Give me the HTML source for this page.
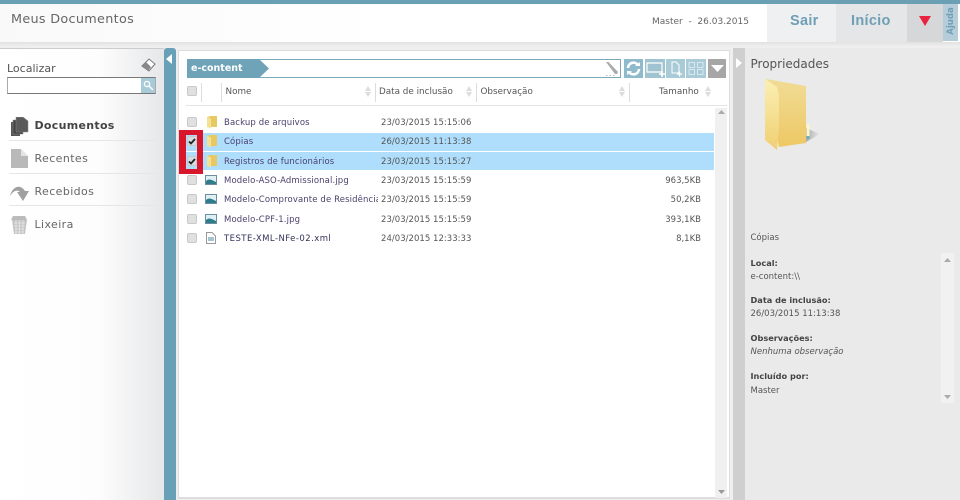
<!DOCTYPE html>
<html><head><meta charset="utf-8">
<style>
html,body{margin:0;padding:0;width:960px;height:500px;overflow:hidden;background:#efefef}
body{font-family:"DejaVu Sans","Liberation Sans",sans-serif;color:#555;position:relative}
div,span,svg{position:absolute;box-sizing:border-box}
.t{white-space:nowrap;line-height:12px}
.r{font-size:8.5px;color:#4a3f6b;left:224px;letter-spacing:.12px}
.d{font-size:8.5px;color:#555;left:381px;letter-spacing:.03px}
.s{font-size:8.5px;color:#555;right:259px;text-align:right}
.cb{left:187px;width:10px;height:10px;background:#e0e0e0;border:1px solid #c8c8c8;border-radius:2px}
.sep{width:1px;top:83px;height:19px;background:#ddd}
.h{font-size:8.8px;color:#555;top:86px}
.sort{width:6px;height:11px;top:86px}
.btn{top:59px;height:19px;background:#9fc3d1}
.nav{font-size:11px;left:34.5px;color:#666;letter-spacing:.4px}
.line{left:9px;width:147px;height:1px;background:#e6e6e6}
.pb{font-size:8.2px;font-weight:bold;color:#444;left:750.5px}
.pv{font-size:8.5px;color:#555;left:750.5px}
</style></head>
<body>
<!-- header -->
<div style="left:0;top:0;width:960px;height:4px;background:#6b9fb4"></div>
<div style="left:0;top:4px;width:960px;height:38px;background:linear-gradient(90deg,#f9f9f9,#fff 40%,#fff)"></div>
<div style="left:0;top:42px;width:960px;height:5px;background:linear-gradient(#e2e2e2,#f0f0f0)"></div>
<div class="t" style="left:11px;top:14px;font-size:12.8px;color:#666;letter-spacing:.3px">Meus Documentos</div>
<div class="t" style="left:652px;top:16px;font-size:9px;color:#666;white-space:pre">Master  -  26.03.2015</div>
<div style="left:767px;top:4px;width:69px;height:38px;background:#eef0f1"></div>
<div style="left:836px;top:4px;width:71px;height:38px;background:#e4e6e8"></div>
<div style="left:907px;top:4px;width:36px;height:38px;background:#d6d7d9"></div>
<div style="left:943px;top:4px;width:15px;height:37px;background:#b4cdd8"></div>
<div class="t" style="left:790px;top:15px;font-weight:bold;color:#6f9fb5;font-family:'Liberation Sans',sans-serif;letter-spacing:.3px;font-size:14.5px">Sair</div>
<div class="t" style="left:851px;top:15px;font-size:14.5px;font-weight:bold;color:#6f9fb5;font-family:'Liberation Sans',sans-serif;letter-spacing:.3px">Início</div>
<svg style="left:918px;top:16px" width="14" height="11"><path d="M1 0H13L7 10Z" fill="#e8223f"/></svg>
<div class="t" style="transform:rotate(-90deg);transform-origin:50% 50%;left:935px;top:15px;width:32px;text-align:center;font-size:8.5px;font-weight:bold;color:#6f9fb5">Ajuda</div>

<!-- left panel -->
<div style="left:0;top:48px;width:164px;height:452px;background:linear-gradient(90deg,#fff 0,#fdfdfd 60%,#e6e7e9 100%);border-top:1px solid #ccc"></div>
<div class="t" style="left:7px;top:63px;font-size:11px;color:#555">Localizar</div>
<svg style="left:141px;top:58px" width="15" height="15"><path d="M1 8L8 1L14 6L8 13Z" fill="#fff" stroke="#777"/><path d="M1 8L5 4L10 9L7 13Z" fill="#888"/></svg>
<div style="left:7px;top:77px;width:149px;height:17px;background:#fff;border:1px solid #aaa;border-top-color:#777;border-bottom-color:#777"></div>
<div style="left:141px;top:78px;width:14px;height:15px;background:#a7cbd8"></div>
<svg style="left:142px;top:79px" width="13" height="13"><circle cx="5" cy="5" r="2.6" fill="none" stroke="#fff" stroke-width="1.3"/><path d="M7 7L11 11" stroke="#fff" stroke-width="1.5"/></svg>

<svg style="left:11px;top:117px" width="18" height="19"><path d="M0 5H9V19H0Z" fill="#555"/><path d="M2 3H12V17H2Z" fill="#444" stroke="#888" stroke-width=".5"/><path d="M5 0H12L17 4V15H5Z" fill="#5a5a5a" stroke="#888" stroke-width=".5"/></svg>
<div class="t" style="left:34.5px;top:120px;font-size:11px;font-weight:bold;color:#444;letter-spacing:.3px">Documentos</div>
<div class="line" style="top:140px"></div>
<svg style="left:11px;top:149px" width="17" height="19"><path d="M0 0H10L17 7V19H0Z" fill="#b9b9b9"/><path d="M10 0L17 7H10Z" fill="#e4e4e4"/></svg>
<div class="t nav" style="top:153px">Recentes</div>
<div class="line" style="top:173px"></div>
<svg style="left:10px;top:183px" width="19" height="19"><path d="M0 13C2 4 10 0 15 8L19 8L13 18L7 9L10 9C7 6 3 8 0 13Z" fill="#a0a0a0"/></svg>
<div class="t nav" style="top:186px">Recebidos</div>
<div class="line" style="top:205px"></div>
<svg style="left:11px;top:215px" width="17" height="19"><path d="M2 1H14L16 5H0Z" fill="#bbb"/><path d="M1 5H16L14 19H3Z" fill="#c4c4c4"/><path d="M3 8H14M3 11H14M4 14H13M4 17H13M5 5V19M8.5 5V19M12 5V19" stroke="#e8e8e8" stroke-width=".8"/></svg>
<div class="t nav" style="top:219px">Lixeira</div>

<!-- teal bar -->
<div style="left:164px;top:48px;width:12px;height:452px;background:#68a0b8;border-radius:3px 3px 0 0"></div>
<svg style="left:166px;top:54px" width="7" height="10"><path d="M6 0V10L0 5Z" fill="#fff"/></svg>

<!-- main panel -->
<div style="left:178px;top:50px;width:552px;height:449px;background:#fff;border:1px solid #ddd;border-bottom:2px solid #ddd"></div>
<div style="left:715px;top:108px;width:12px;height:390px;background:#f0f0f0"></div>
<svg style="left:718px;top:110px" width="7" height="4"><path d="M0 4H7L3.5 0Z" fill="#aaa"/></svg>
<svg style="left:718px;top:490px" width="7" height="4"><path d="M0 0H7L3.5 4Z" fill="#999"/></svg>

<!-- toolbar -->
<div style="left:187px;top:59px;width:434px;height:19px;background:#fff;border:1px solid #7ba9bc"></div>
<svg style="left:187px;top:59px" width="83" height="19"><path d="M0 0H72L82 9.5L72 19H0Z" fill="#6fa3b8"/></svg>
<div class="t" style="left:191px;top:63px;font-size:9.5px;font-weight:bold;color:#fff">e-content</div>
<svg style="left:604px;top:62px" width="15" height="15"><path d="M2 0H4.500L14 10L13 12H11Z" fill="#aaa"/><path d="M2 13.500H3.500M5.500 13.500H7M9 13.500H10.500" stroke="#bbb"/></svg>
<div class="btn" style="left:624px;width:19px;background:#8fbacb"></div>
<svg style="left:626px;top:61px" width="15" height="15"><path d="M2 7A5.500 5.500 0 0 1 12 4M13 8A5.500 5.500 0 0 1 3 11" fill="none" stroke="#fff" stroke-width="2.600"/><path d="M9 5H14V1ZM6 10H1V14Z" fill="#fff"/></svg>
<div class="btn" style="left:645px;width:20px"></div>
<svg style="left:645px;top:59px" width="21" height="19"><path d="M2 4H17V13H2Z" fill="none" stroke="#fff" stroke-width="1.200"/><path d="M14 15H20M17 12V18" stroke="#fff" stroke-width="1.600"/></svg>
<div class="btn" style="left:666px;width:19px;background:#a9cad7"></div>
<svg style="left:666px;top:59px" width="19" height="19"><path d="M6 3H10L13 6V14H6Z" fill="none" stroke="#fff"/><path d="M11 15H16M13.500 12.500V17.500" stroke="#fff" stroke-width="1.300"/></svg>
<div class="btn" style="left:686px;width:20px;background:#a9cad7"></div>
<svg style="left:686px;top:59px" width="20" height="19"><path d="M3 3.500H8.500V8.500H3ZM11.500 3.500H17V8.500H11.500ZM3 10.500H8.500V15.500H3ZM11.500 10.500H17V15.500H11.500Z" fill="none" stroke="#d8e8ee"/></svg>
<div class="btn" style="left:708px;width:18px;background:#a6a6a6"></div>
<svg style="left:711px;top:65px" width="13" height="8"><path d="M0 0H13L6.500 7Z" fill="#fff"/></svg>

<!-- table head -->
<div class="cb" style="top:86px"></div>
<div class="sep" style="left:201px"></div>
<div class="sep" style="left:221px"></div>
<div class="sep" style="left:375px"></div>
<div class="sep" style="left:476px"></div>
<div class="sep" style="left:629px"></div>
<div class="t h" style="left:225.500px">Nome</div>
<div class="t h" style="left:379px">Data de inclusão</div>
<div class="t h" style="left:480.500px">Observação</div>
<div class="t h" style="left:659px">Tamanho</div>
<svg class="sort" style="left:365px"><path d="M0 5L3 0L6 5ZM0 6L3 11L6 6Z" fill="#ddd"/></svg>
<svg class="sort" style="left:466px"><path d="M0 5L3 0L6 5ZM0 6L3 11L6 6Z" fill="#ddd"/></svg>
<svg class="sort" style="left:619px"><path d="M0 5L3 0L6 5ZM0 6L3 11L6 6Z" fill="#ddd"/></svg>
<svg class="sort" style="left:705px"><path d="M0 5L3 0L6 5ZM0 6L3 11L6 6Z" fill="#ddd"/></svg>
<div style="left:186px;top:105px;width:541px;height:1px;background:#e4e4e4"></div>

<!-- highlight -->
<div style="left:186px;top:133px;width:528px;height:18px;background:#aedefc"></div>
<div style="left:186px;top:152px;width:528px;height:18px;background:#aedefc"></div>
<div style="left:179px;top:130px;width:24px;height:44px;border:solid #d8162c;border-width:5px 6px 5px 7px"></div>

<!-- checkboxes -->
<div class="cb" style="top:117px"></div>
<div class="cb" style="top:136px;background:#d4dde2"></div>
<div class="cb" style="top:156px;background:#d4dde2"></div>
<div class="cb" style="top:175px"></div>
<div class="cb" style="top:194px"></div>
<div class="cb" style="top:214px"></div>
<div class="cb" style="top:233px"></div>
<svg style="left:187px;top:137px" width="10" height="9"><path d="M2 4.500L4 6.500L8 2" fill="none" stroke="#222" stroke-width="1.800"/></svg>
<svg style="left:187px;top:157px" width="10" height="9"><path d="M2 4.500L4 6.500L8 2" fill="none" stroke="#222" stroke-width="1.800"/></svg>

<!-- folder icons -->
<svg style="left:207px;top:116px" width="11" height="13"><path d="M0 1L4 0H10V11H3Z" fill="#e8c860"/><path d="M0 1L4 2.500V12.500L0 11Z" fill="#f5e196"/></svg>
<svg style="left:207px;top:135px" width="11" height="13"><path d="M0 1L4 0H10V11H3Z" fill="#e8c860"/><path d="M0 1L4 2.500V12.500L0 11Z" fill="#f5e196"/></svg>
<svg style="left:207px;top:155px" width="11" height="13"><path d="M0 1L4 0H10V11H3Z" fill="#e8c860"/><path d="M0 1L4 2.500V12.500L0 11Z" fill="#f5e196"/></svg>
<!-- image icons -->
<svg style="left:205px;top:175px" width="12" height="10"><rect x=".5" y=".5" width="11" height="9" fill="#dff0f5" stroke="#6d8ea0"/><path d="M1 8V6C4 3 7 5 11 7V9H1Z" fill="#2f7d8c"/></svg>
<svg style="left:205px;top:194px" width="12" height="10"><rect x=".5" y=".5" width="11" height="9" fill="#dff0f5" stroke="#6d8ea0"/><path d="M1 8V6C4 3 7 5 11 7V9H1Z" fill="#2f7d8c"/></svg>
<svg style="left:205px;top:214px" width="12" height="10"><rect x=".5" y=".5" width="11" height="9" fill="#dff0f5" stroke="#6d8ea0"/><path d="M1 8V6C4 3 7 5 11 7V9H1Z" fill="#2f7d8c"/></svg>
<svg style="left:206px;top:232px" width="10" height="12"><path d="M.5 .5H6L9.500 4V11.500H.5Z" fill="#fff" stroke="#999"/><path d="M2 6H8M2 8H8" stroke="#4a8a99"/></svg>

<!-- rows -->
<div class="t r" style="top:117px">Backup de arquivos</div>
<div class="t r" style="top:136px">Cópias</div>
<div class="t r" style="top:156px">Registros de funcionários</div>
<div class="t r" style="top:175px">Modelo-ASO-Admissional.jpg</div>
<div class="t r" style="top:194px;width:154px;overflow:hidden">Modelo-Comprovante de Residência.jpg</div>
<div class="t r" style="top:214px">Modelo-CPF-1.jpg</div>
<div class="t r" style="top:233px;color:#333358;letter-spacing:.45px">TESTE-XML-NFe-02.xml</div>

<div class="t d" style="top:117px">23/03/2015 15:15:06</div>
<div class="t d" style="top:136px">26/03/2015 11:13:38</div>
<div class="t d" style="top:156px">23/03/2015 15:15:27</div>
<div class="t d" style="top:175px">23/03/2015 15:15:59</div>
<div class="t d" style="top:194px">23/03/2015 15:15:59</div>
<div class="t d" style="top:214px">23/03/2015 15:15:59</div>
<div class="t d" style="top:233px">24/03/2015 12:33:33</div>

<div class="t s" style="top:175px">963,5KB</div>
<div class="t s" style="top:194px">50,2KB</div>
<div class="t s" style="top:214px">393,1KB</div>
<div class="t s" style="top:233px">8,1KB</div>

<!-- properties -->
<div style="left:733px;top:48px;width:12px;height:452px;background:#cfcfcf"></div>
<div style="left:745px;top:48px;width:215px;height:452px;background:#eaeaea"></div>
<svg style="left:736px;top:58px" width="7" height="10"><path d="M0 0V10L6 5Z" fill="#fff"/></svg>
<div class="t" style="left:750.500px;top:58px;font-size:12px;color:#555">Propriedades</div>
<svg style="left:762px;top:78px" width="60" height="75">
<defs>
<linearGradient id="a" x1="0" y1="0" x2="0" y2="1"><stop offset="0" stop-color="#f0dc96"/><stop offset="1" stop-color="#eec864"/></linearGradient>
<linearGradient id="b" x1="0" y1="0" x2="0" y2="1"><stop offset="0" stop-color="#fbf0b4"/><stop offset="1" stop-color="#f0cf72"/></linearGradient>
<linearGradient id="c" x1="0" y1="0" x2="1" y2="0"><stop offset="0" stop-color="#aaa"/><stop offset="1" stop-color="#eaeaea"/></linearGradient>
</defs>
<path d="M44 64L58 56L44 50Z" fill="url(#c)"/>
<path d="M4 1L44 8V65L17 69Z" fill="url(#a)"/>
<path d="M3 1L15 9L17 17V50L15 72L3 62Z" fill="url(#b)"/>
<rect x="44.500" y="46" width="3" height="15" fill="#fdf6c8"/>
<rect x="44.500" y="58" width="3" height="3" fill="#6fb0b8"/>
</svg>
<div class="t pv" style="top:232px">Cópias</div>
<div style="left:941px;top:253px;width:13px;height:150px;background:#f1f1f1"></div>
<svg style="left:944px;top:258px" width="7" height="4"><path d="M0 4H7L3.500 0Z" fill="#aaa"/></svg>
<svg style="left:944px;top:395px" width="7" height="4"><path d="M0 0H7L3.500 4Z" fill="#aaa"/></svg>
<div class="t pb" style="top:257px">Local:</div>
<div class="t pv" style="top:271px">e-content:\\</div>
<div class="t pb" style="top:294px">Data de inclusão:</div>
<div class="t pv" style="top:308px">26/03/2015 11:13:38</div>
<div class="t pb" style="top:332px">Observações:</div>
<div class="t pv" style="top:346px;font-style:italic">Nenhuma observação</div>
<div class="t pb" style="top:370px">Incluído por:</div>
<div class="t pv" style="top:385px">Master</div>
</body></html>
